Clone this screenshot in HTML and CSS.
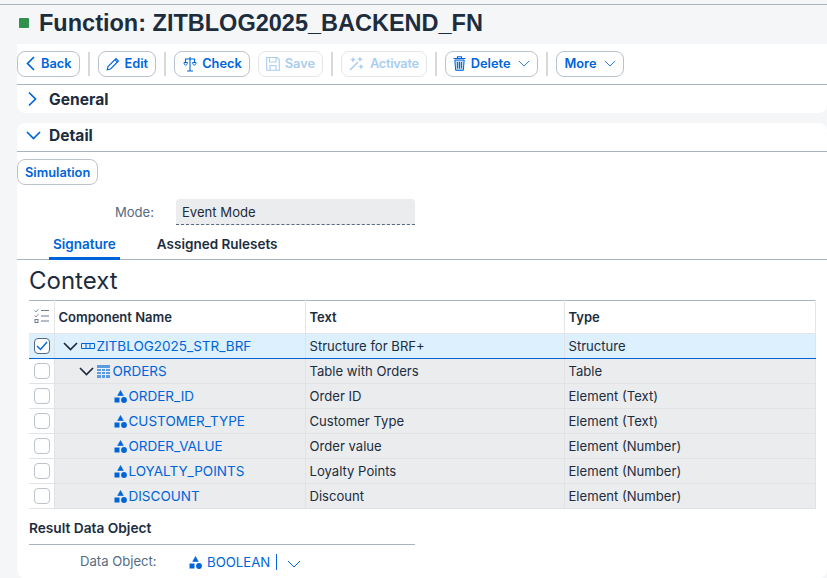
FILE: index.html
```html
<!DOCTYPE html>
<html lang="en">
<head>
<meta charset="utf-8">
<title>Function</title>
<link rel="stylesheet" href="styles.css">
</head>
<body>
<svg class="defs" width="0" height="0" aria-hidden="true"><defs>
<symbol id="el" viewBox="0 0 13 13"><path d="M6.5 0.5 9.3 5.5H3.7Z" fill="#0064d9" stroke="#0064d9" stroke-width=".6"/><rect x="0.5" y="7.5" width="5" height="5" fill="#0064d9"/><circle cx="10" cy="10" r="2.9" fill="#0064d9"/></symbol>
<symbol id="down" viewBox="0 0 14 8"><path d="M1 1 7 7 13 1" fill="none" stroke="currentColor" stroke-width="1"/></symbol>
</defs></svg>
<header class="titlebar">
  <span class="status"></span>
  <h1 class="title">Function: ZITBLOG2025_BACKEND_FN</h1>
</header>
<main class="content">
  <nav class="toolbar">
    <button class="btn"><svg class="ic" width="11" height="15" viewBox="0 0 11 15"><path d="M9 1 2.5 7.5 9 14" fill="none" stroke="#0064d9" stroke-width="1.7"/></svg>Back</button>
    <span class="sep"></span>
    <button class="btn"><svg class="ic" width="14" height="14" viewBox="0 0 14 14"><path d="M1.2 12.8 2 9.5 10 1.5 12.5 4 4.5 12Z M8.8 2.7 11.3 5.2" fill="none" stroke="#0064d9" stroke-width="1.1"/></svg>Edit</button>
    <span class="sep"></span>
    <button class="btn"><svg class="ic" width="15" height="16" viewBox="0 0 15 16"><path d="M8 1V14.5M5 15H11M3 3H13M3.5 3V6M12.5 3V6" fill="none" stroke="#0064d9" stroke-width="1.1"/><path d="M2 6.5H5.4C5.4 10 2 10 2 6.5ZM10.6 6.5H14C14 10 10.6 10 10.6 6.5Z" fill="none" stroke="#0064d9"/></svg>Check</button>
    <button class="btn off"><svg class="ic" width="14" height="15" viewBox="0 0 14 15"><path d="M.7 1.5H11L13.3 3.8V14.3H.7ZM3.5 1.5V6H10V1.5M4 14.3V9.5H10V14.3" fill="none" stroke="#a9cdf0" stroke-width="1.1"/></svg>Save</button>
    <span class="sep"></span>
    <button class="btn off tight"><svg class="ic" width="16" height="15" viewBox="0 0 16 15"><path d="M1 14 9 6" stroke="#a9cdf0" stroke-width="1.6"/><path d="M4 1 5 3 7 3.5 5 4.5 4 6.5 3 4.5 1 3.5 3 3ZM11 .5 12 2.5 14 3 12 4 11 6 10 4 8 3 10 2.5ZM12 8 13 10 15 10.5 13 11.5 12 13.5 11 11.5 9 10.5 11 10Z" fill="#a9cdf0"/></svg>Activate</button>
    <span class="sep"></span>
    <button class="btn"><svg class="ic" width="13" height="15" viewBox="0 0 13 15"><path d="M.5 2.5H12.5M4.5 2.5V.8H8.5V2.5" fill="none" stroke="#0064d9" stroke-width="1.1"/><path d="M1.8 4H11.2L10.3 14.3H2.7Z" fill="#bcd8f3" stroke="#0064d9"/><path d="M4.6 6V12.5M6.5 6V12.5M8.4 6V12.5" stroke="#0064d9"/></svg>Delete<svg class="caret" width="12" height="7"><use href="#down"/></svg></button>
    <span class="sep"></span>
    <button class="btn"><span>More</span><svg class="caret" width="12" height="7"><use href="#down"/></svg></button>
  </nav>
  <section class="panel collapsed">
    <svg class="pico" width="11" height="16" viewBox="0 0 11 16"><path d="M2 1.5 8.5 8 2 14.5" fill="none" stroke="#0064d9" stroke-width="1.7"/></svg>
    <h2 class="phead">General</h2>
  </section>
  <section class="detail">
    <div class="detail-head">
      <svg class="pico" width="15" height="9" viewBox="0 0 15 9"><path d="M1 1 7.5 7.5 14 1" fill="none" stroke="#0064d9" stroke-width="1.7"/></svg>
      <h2 class="phead">Detail</h2>
    </div>
    <div class="simrow"><button class="btn">Simulation</button></div>
    <div class="moderow"><label class="lbl">Mode:</label><div class="field">Event Mode</div></div>
    <div class="tabs"><a class="tab on">Signature</a><a class="tab">Assigned Rulesets</a></div>
    <div class="body">
      <h3 class="ctx">Context</h3>
      <table class="tbl">
        <colgroup><col class="c0"><col class="c1"><col class="c2"><col class="c3"></colgroup>
        <thead><tr>
          <th class="sel"><svg width="16" height="16" viewBox="0 0 16 16"><path d="M.5 2.5 2 4 4.5 1M.5 7.5 2 9 4.5 6" fill="none" stroke="#6a7d90" stroke-width=".8"/><rect x="1" y="11.5" width="3" height="3" fill="none" stroke="#6a7d90"/><path d="M7 2.5H15M7 8H15M7 13H15" stroke="#6a7d90"/></svg></th>
          <th>Component Name</th><th>Text</th><th>Type</th>
        </tr></thead>
        <tbody>
          <tr class="picked">
            <td class="sel"><span class="cb checked"><svg width="12" height="10" viewBox="0 0 12 10"><path d="M1 5 4.5 8.5 11 1" fill="none" stroke="#0064d9" stroke-width="1.4"/></svg></span></td>
            <td><div class="name l0"><svg class="tog" width="15" height="9" viewBox="0 0 15 9"><path d="M1 1 7.5 7.5 14 1" fill="none" stroke="#1d2d3e" stroke-width="1.7"/></svg><svg class="tic" width="14" height="6" viewBox="0 0 14 6"><path d="M.5.5H13.5V5.5H.5ZM5 .5V5.5M9 .5V5.5" fill="none" stroke="#0064d9"/></svg><a>ZITBLOG2025_STR_BRF</a></div></td>
            <td>Structure for BRF+</td><td>Structure</td>
          </tr>
          <tr>
            <td class="sel"><span class="cb"></span></td>
            <td><div class="name l1"><svg class="tog" width="15" height="9" viewBox="0 0 15 9"><path d="M1 1 7.5 7.5 14 1" fill="none" stroke="#1d2d3e" stroke-width="1.7"/></svg><svg class="tic2" width="13" height="13" viewBox="0 0 13 13"><rect width="13" height="13" fill="#5c9be0"/><path d="M0 3.5H13M0 6.5H13M0 9.5H13M4.5 3V13M8.5 3V13" stroke="#e4effa"/></svg><a>ORDERS</a></div></td>
            <td>Table with Orders</td><td>Table</td>
          </tr>
          <tr><td class="sel"><span class="cb"></span></td><td><div class="name l2"><svg width="13" height="13"><use href="#el"/></svg><a>ORDER_ID</a></div></td><td>Order ID</td><td>Element (Text)</td></tr>
          <tr><td class="sel"><span class="cb"></span></td><td><div class="name l2"><svg width="13" height="13"><use href="#el"/></svg><a>CUSTOMER_TYPE</a></div></td><td>Customer Type</td><td>Element (Text)</td></tr>
          <tr><td class="sel"><span class="cb"></span></td><td><div class="name l2"><svg width="13" height="13"><use href="#el"/></svg><a>ORDER_VALUE</a></div></td><td>Order value</td><td>Element (Number)</td></tr>
          <tr><td class="sel"><span class="cb"></span></td><td><div class="name l2"><svg width="13" height="13"><use href="#el"/></svg><a>LOYALTY_POINTS</a></div></td><td>Loyalty Points</td><td>Element (Number)</td></tr>
          <tr><td class="sel"><span class="cb"></span></td><td><div class="name l2"><svg width="13" height="13"><use href="#el"/></svg><a>DISCOUNT</a></div></td><td>Discount</td><td>Element (Number)</td></tr>
        </tbody>
      </table>
      <div class="result">
        <h4 class="rhead">Result Data Object</h4>
        <div class="dorow">
          <span class="dolbl">Data Object:</span>
          <svg width="13" height="13"><use href="#el"/></svg>
          <a class="dolink">BOOLEAN</a><span class="cursor"></span>
          <svg class="docaret" width="14" height="8"><use href="#down"/></svg>
        </div>
      </div>
    </div>
  </section>
</main>
</body>
</html>
```

FILE: styles.css
```css
* { box-sizing: border-box; }
html { height: 578px; overflow: hidden; background: #f5f6f7; }
body {
  margin: 4px 0 0;
  height: 574px;
  overflow: hidden;
  border-top: 1px solid #a9b4be;
  font-family: "Inter", "Noto Sans", sans-serif;
  font-size: 13.1px;
  color: #1d2d3e;
}
.defs { position: absolute; }
.titlebar { height: 39px; display: flex; align-items: center; padding-left: 19px; gap: 10px; padding-bottom: 2px; }
.status { width: 10px; height: 10px; background: #30914c; border-radius: 1px; margin-bottom: 2px; }
.title { margin: 0; font: 700 23.5px "Liberation Sans", sans-serif; }
.content { margin-left: 17px; }
.toolbar {
  height: 41px; background: #fff; border-bottom: 1px solid #a9b4be;
  display: flex; align-items: center; gap: 8px; padding-bottom: 1px;
}
.btn {
  height: 26px; padding: 0 7px; border: 1px solid #bcc3ca; border-radius: 8px; background: #fff;
  color: #0064d9; font: 600 12.8px "Inter", sans-serif; display: flex; align-items: center; gap: 5px;
}
.btn.off { color: #a9cdf0; border-color: #e3e6e9; }
.btn.tight { letter-spacing: -.3px; }
.caret { margin-left: 3px; color: #0064d9; }
.sep { width: 2px; height: 24px; background: #d9d9d9; }
.panel.collapsed {
  height: 28px; background: #fff; border-radius: 0 0 8px 8px; display: flex; align-items: center;
  padding-left: 10px; gap: 11px; margin-bottom: 10px;
}
.phead { margin: 0; font: 700 15.6px "Inter", sans-serif; }
.detail { background: #fff; border-radius: 8px; height: 455px; }
.detail-head { height: 29px; border-bottom: 1px solid #a9b4be; display: flex; align-items: center; padding: 0 0 3px 9px; gap: 8px; }
.simrow { padding-top: 7px; height: 47px; }
.moderow { display: flex; align-items: center; height: 26px; }
.lbl { width: 137px; text-align: right; color: #556b82; }
.field {
  margin-left: 22px; width: 239px; height: 26px; background: #eaecee; border-bottom: 1px dashed #556b82;
  border-radius: 4px 4px 0 0; padding: 0 6px; line-height: 26px;
}
.tabs { height: 25px; margin-top: 10px; border-bottom: 1px solid #a9b4be; display: flex; padding-left: 32px; font-size: 13.5px; }
.tab { font-weight: 600; height: 25px; padding: 0 4px; margin-right: 33px; line-height: 18px; }
.tab.on { color: #0064d9; border-bottom: 3px solid #0064d9; }
.body { padding-left: 12px; }
.ctx { margin: 0; font: 400 24px "Inter", sans-serif; height: 40px; line-height: 41px; }
.tbl { width: 786px; table-layout: fixed; border-collapse: collapse; border-top: 1px solid #a9b4be; }
.c0 { width: 25px; } .c1 { width: 251px; } .c2 { width: 259px; } .c3 { width: 251px; }
.tbl th { height: 33px; text-align: left; font-weight: 600; font-size: 13px; padding: 0 4px; border: 1px solid #e5e5e5; border-top: 0; border-left: 0; }
.tbl td { height: 25px; padding: 0 4px; background: #eaecee; border: 1px solid #e0e2e4; border-top: 0; border-left: 0; white-space: nowrap; }
.tbl td.sel, .tbl th.sel { background: #fff; padding: 0 0 0 1px; text-align: center; }
.picked td { background: #dcf0fd; border-bottom: 1px solid #0064d9; }
.tbl .picked td.sel { background: #dcf0fd; }
.cb { display: block; width: 16px; height: 16px; margin: 0 auto; border: 1px solid #bcc3ca; border-radius: 4px; background: #fff; }
.cb.checked { border-color: #556b82; display: flex; align-items: center; justify-content: center; }
.name { display: flex; align-items: center; color: #0064d9; font-size: 13.5px; }
.name a { margin-left: 2px; }
.l0 { padding-left: 4px; }
.l1 { padding-left: 20px; }
.name.l1 a { margin-left: 3px; }
.l2 { padding-left: 55px; }
.tog { margin-right: 3px; }
.result { width: 386px; }
.rhead { margin: 0; height: 36px; padding-top: 11px; font: 600 13.7px "Inter", sans-serif; border-bottom: 1px solid #a9b4be; }
.dorow { display: flex; align-items: center; height: 34px; }
.dolbl { width: 160px; padding-left: 51px; color: #556b82; padding-bottom: 2px; }
.dolink { color: #0064d9; margin-left: 5px; font-size: 13.2px; }
.cursor { width: 1px; height: 16px; background: #0064d9; margin-left: 6px; }
.docaret { color: #0064d9; margin: 4px 0 0 10px; }
```
